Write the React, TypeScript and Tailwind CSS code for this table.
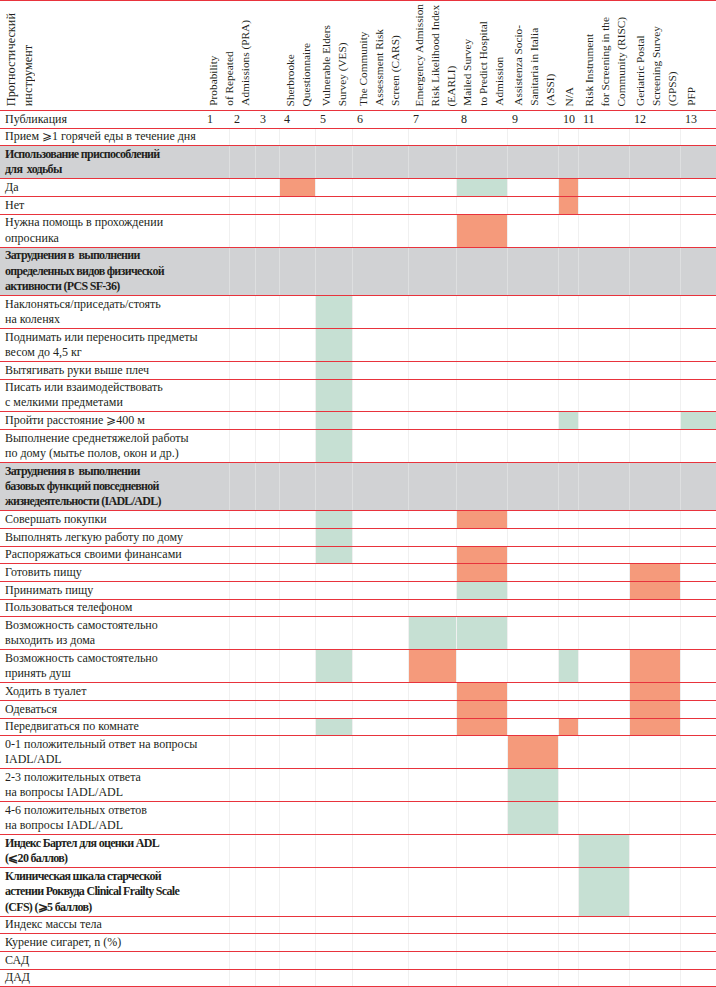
import React from 'react';

const grid = 'grid grid-cols-[202px_27px_26px_24px_36px_37px_56px_48px_51px_51px_20px_51px_51px_36px]';

type Row = { label: string[]; group?: boolean; bold?: boolean; cells?: string };

const rows: Row[] = [
  { label: ['Прием ⩾1 горячей еды в течение дня'] },
  { label: ['Использование приспособлений', 'для  ходьбы'], group: true },
  { label: ['Да'], cells: '...o...g.o...' },
  { label: ['Нет'], cells: '.........o...' },
  { label: ['Нужна помощь в прохождении', 'опросника'], cells: '.......o.....' },
  { label: ['Затруднения в  выполнении', 'определенных видов физической', 'активности (PCS SF-36)'], group: true },
  { label: ['Наклоняться/приседать/стоять', 'на коленях'], cells: '....g........' },
  { label: ['Поднимать или переносить предметы', 'весом до 4,5 кг'], cells: '....g........' },
  { label: ['Вытягивать руки выше плеч'], cells: '....g........' },
  { label: ['Писать или взаимодействовать', 'с мелкими предметами'], cells: '....g........' },
  { label: ['Пройти расстояние ⩾400 м'], cells: '....g....g..g' },
  { label: ['Выполнение среднетяжелой работы', 'по дому (мытье полов, окон и др.)'], cells: '....g........' },
  { label: ['Затруднения в  выполнении', 'базовых функций повседневной', 'жизнедеятельности (IADL/ADL)'], group: true },
  { label: ['Совершать покупки'], cells: '....g..o.....' },
  { label: ['Выполнять легкую работу по дому'], cells: '....g........' },
  { label: ['Распоряжаться своими финансами'], cells: '....g..o.....' },
  { label: ['Готовить пищу'], cells: '.......o...o.' },
  { label: ['Принимать пищу'], cells: '.......g...o.' },
  { label: ['Пользоваться телефоном'] },
  { label: ['Возможность самостоятельно', 'выходить из дома'], cells: '......gg.....' },
  { label: ['Возможность самостоятельно', 'принять душ'], cells: '....g.o..g.o.' },
  { label: ['Ходить в туалет'], cells: '.......o...o.' },
  { label: ['Одеваться'], cells: '.......o...o.' },
  { label: ['Передвигаться по комнате'], cells: '....g..o.o.o.' },
  { label: ['0-1 положительный ответ на вопросы', 'IADL/ADL'], cells: '........o....' },
  { label: ['2-3 положительных ответа', 'на вопросы IADL/ADL'], cells: '........g....' },
  { label: ['4-6 положительных ответов', 'на вопросы IADL/ADL'], cells: '........g....' },
  { label: ['Индекс Бартел для оценки ADL', '(⩽20 баллов)'], bold: true, cells: '..........g..' },
  { label: ['Клиническая шкала старческой', 'астении Роквуда Clinical Frailty Scale', '(CFS) (⩾5 баллов)'], bold: true, cells: '..........g..' },
  { label: ['Индекс массы тела'] },
  { label: ['Курение сигарет, n (%)'] },
  { label: ['САД'] },
  { label: ['ДАД'] },
];

const headers: { lines: string[]; span?: boolean }[] = [
  { lines: ['Прогностический', 'инструмент'] },
  { lines: ['Probability', 'of Repeated', 'Admissions (PRA)'], span: true },
  { lines: ['Sherbrooke', 'Questionnaire'] },
  { lines: ['Vulnerable Elders', 'Survey (VES)'] },
  { lines: ['The Community', 'Assessment Risk', 'Screen (CARS)'] },
  { lines: ['Emergency Admission', 'Risk Likelihood Index', '(EARLI)'] },
  { lines: ['Mailed Survey', 'to Predict Hospital', 'Admission'] },
  { lines: ['Assistenza Socio-', 'Sanitaria in Italia', '(ASSI)'] },
  { lines: ['N/A'] },
  { lines: ['Risk Instrument', 'for Screening in the', 'Community (RISC)'] },
  { lines: ['Geriatric Postal', 'Screening Survey', '(GPSS)'] },
  { lines: ['PFP'] },
];

const cellBg = (c: string) => (c === 'o' ? 'bg-[#f59a7b]' : c === 'g' ? 'bg-[#c6e0d3]' : '');

const App: React.FC = () => {
  return (
    <div className="w-[716px] min-h-[987px] bg-white font-['Liberation_Serif','DejaVu_Serif',serif] text-[12px] text-[#231f20]">
      {/* Header */}
      <div className={`${grid} h-[111px] border-y border-[#e8333c] text-[11.3px]`}>
        {headers.map((h, i) => (
          <div
            key={i}
            className={`flex items-end pb-[4px] ${i === 0 ? 'pl-[3px] text-[12.3px]' : 'pl-[3px]'} ${h.span ? 'col-span-3' : ''}`}
          >
            <div
              className={`rotate-180 whitespace-nowrap [writing-mode:vertical-rl] ${i === 0 ? 'leading-[17px]' : 'leading-[16px]'}`}
            >
              {h.lines.map((l, j) => (
                <div key={j}>{l}</div>
              ))}
            </div>
          </div>
        ))}
      </div>

      {/* Publication numbers */}
      <div className={`${grid} border-b border-[#e8333c] leading-[15.3px]`}>
        <div className="py-[0.7px] pl-[5px]">Публикация</div>
        {['1', '2', '3', '4', '5', '6', '7', '8', '9', '10', '11', '12', '13'].map((n) => (
          <div key={n} className="py-[0.7px] pl-[5px]">{n}</div>
        ))}
      </div>

      {rows.map((r, i) => {
        const cells = (r.cells ?? '.............').split('');
        return (
          <div
            key={i}
            className={`${grid} border-b border-[#e8333c] leading-[15.3px] ${r.group ? 'bg-[#d1d2d4]' : ''}`}
          >
            <div className={`py-[0.7px] pl-[5px] ${r.group || r.bold ? 'font-bold tracking-[-0.7px]' : ''}`}>
              {r.label.map((l, j) => (
                <div key={j} className="whitespace-pre">{l}</div>
              ))}
            </div>
            {cells.map((c, j) => (
              <div
                key={j}
                className={`${j > 0 ? (r.group ? 'border-l border-[#dedfe0]' : 'border-l border-[#f0f0f0]') : ''} ${cellBg(c)}`}
              />
            ))}
          </div>
        );
      })}
    </div>
  );
};

export default App;
